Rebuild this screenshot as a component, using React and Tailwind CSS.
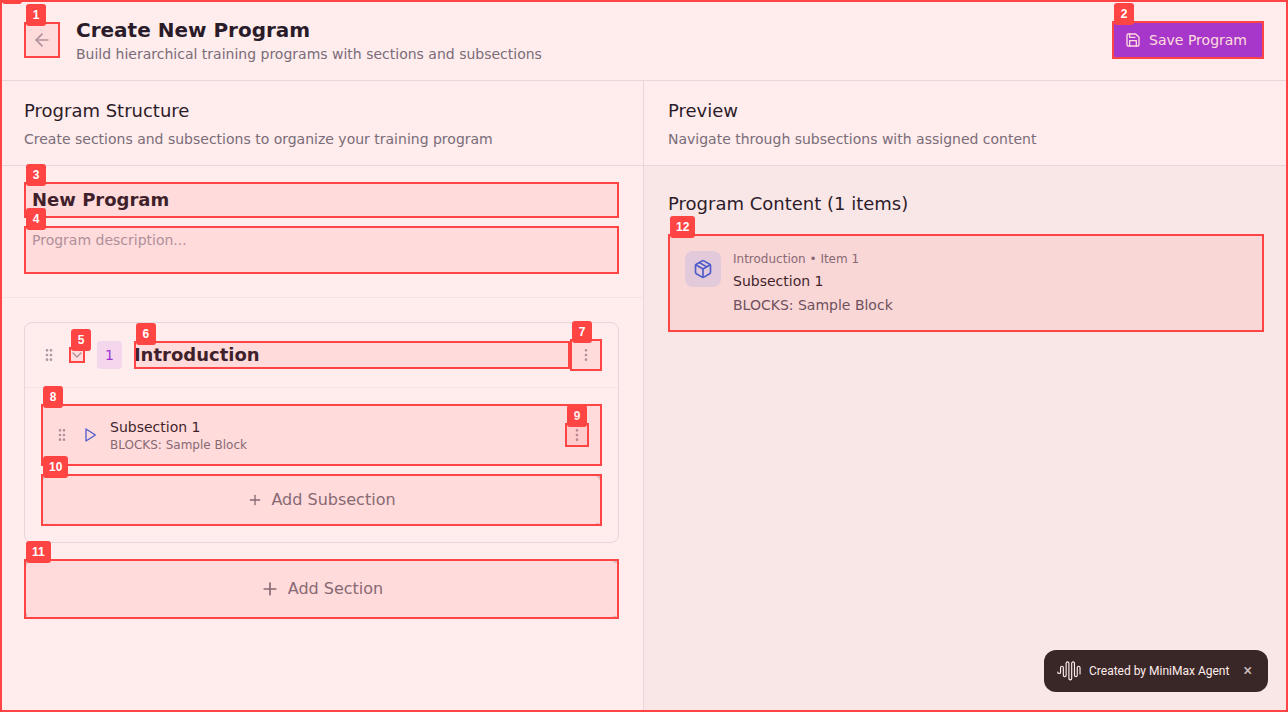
import React from "react";
import { ArrowLeft, ChevronDown, GripVertical, EllipsisVertical, Plus, Package } from "lucide-react";

function Mark({ n }) {
  return (
    <span className="pointer-events-none absolute inset-0 z-20 border-2 border-[#ff4444] bg-[#ff4444]/10">
      <span className="absolute -top-5 left-0 flex h-[22px] min-w-5 items-center justify-center rounded-[3px] bg-[#ff4444] px-1.5 font-['Liberation_Sans',sans-serif] text-xs leading-[14px] font-bold text-white">
        {n}
      </span>
    </span>
  );
}

function PageMark() {
  return (
    <span className="pointer-events-none absolute inset-0 z-10 border-2 border-[#ff4444] bg-[#ff4444]/10">
      <span className="absolute -top-5 left-0 h-[22px] w-5 rounded-[3px] bg-[#ff4444]" />
    </span>
  );
}

function SaveIcon() {
  return (
    <svg width="16" height="16" viewBox="0 0 24 24" fill="none" stroke="currentColor" strokeWidth="2" strokeLinecap="round" strokeLinejoin="round" aria-hidden="true">
      <path d="M19 21H5a2 2 0 0 1-2-2V5a2 2 0 0 1 2-2h11l5 5v11a2 2 0 0 1-2 2z" />
      <polyline points="17 21 17 13 7 13 7 21" />
      <polyline points="7 3 7 8 15 8" />
    </svg>
  );
}

function PlayIcon() {
  return (
    <svg className="ml-3 text-[#2563eb]" width="16" height="16" viewBox="0 0 24 24" fill="none" stroke="currentColor" strokeWidth="2" strokeLinecap="round" strokeLinejoin="round" aria-hidden="true">
      <polygon points="6 3 20 12 6 21 6 3" />
    </svg>
  );
}

function PaneHeader({ title, text }) {
  return (
    <div className="border-b border-[#e5e7eb] bg-white px-6 py-4">
      <h2 className="text-lg leading-7 font-medium text-[#111827]">{title}</h2>
      <p className="mt-1 text-sm leading-5 text-[#6b7280]">{text}</p>
    </div>
  );
}

function Header() {
  return (
    <header className="flex items-center justify-between border-b border-[#e5e7eb] bg-white px-6 py-4">
      <div className="flex items-center gap-4">
        <button aria-label="Back" className="relative p-2 text-[#9ca3af]">
          <ArrowLeft size={20} />
          <Mark n="1" />
        </button>
        <div>
          <h1 className="text-xl leading-7 font-bold text-[#111827]">Create New Program</h1>
          <p className="text-sm leading-5 text-[#6b7280]">Build hierarchical training programs with sections and subsections</p>
        </div>
      </div>
      <button className="relative flex items-center gap-2 rounded-lg bg-[#9333ea] py-[9px] pr-[17px] pl-[13px] text-sm leading-5 font-medium text-white">
        <SaveIcon />
        Save Program
        <Mark n="2" />
      </button>
    </header>
  );
}

function Subsection() {
  return (
    <div className="relative flex items-center rounded-lg bg-white p-[13px]">
      <GripVertical size={16} className="text-[#9ca3af]" />
      <PlayIcon />
      <div className="ml-3 flex-1">
        <h4 className="text-sm leading-5 font-medium text-[#111827]">Subsection 1</h4>
        <p className="text-xs leading-4 text-[#6b7280]">BLOCKS: Sample Block</p>
      </div>
      <button aria-label="Subsection options" className="relative p-1 text-[#9ca3af]">
        <EllipsisVertical size={16} />
        <Mark n="9" />
      </button>
      <Mark n="8" />
    </div>
  );
}

function Section() {
  return (
    <section className="rounded-lg border border-[#e5e7eb] bg-white">
      <div className="flex items-center border-b border-[#f3f4f6] p-4">
        <GripVertical size={16} className="text-[#9ca3af]" />
        <button aria-label="Collapse section" className="relative ml-3 text-[#9ca3af]">
          <ChevronDown size={16} />
          <Mark n="5" />
        </button>
        <span className="ml-3 rounded bg-[#f3e8ff] px-2 py-1 text-sm leading-5 font-medium text-[#9333ea]">1</span>
        <div className="relative ml-3 flex-1">
          <input aria-label="Section title" defaultValue="Introduction" className="block h-7 w-full bg-transparent text-lg leading-7 font-semibold text-[#111827] outline-none" />
          <Mark n="6" />
        </div>
        <button aria-label="Section options" className="relative p-2 text-[#9ca3af]">
          <EllipsisVertical size={16} />
          <Mark n="7" />
        </button>
      </div>
      <div className="flex flex-col gap-2 p-4">
        <Subsection />
        <div className="relative">
          <button className="flex w-full items-center justify-center gap-2 rounded-lg border-2 border-dashed border-[#d1d5db] bg-white p-3 leading-6 text-[#6b7280]">
            <Plus size={16} />
            Add Subsection
          </button>
          <Mark n="10" />
        </div>
      </div>
    </section>
  );
}

function Structure() {
  return (
    <div className="flex w-1/2 flex-col border-r border-[#e5e7eb] bg-white">
      <PaneHeader title="Program Structure" text="Create sections and subsections to organize your training program" />
      <div className="border-b border-[#f3f4f6] px-6 pt-4 pb-[23px]">
        <div className="relative">
          <input aria-label="Program title" defaultValue="New Program" className="block h-9 w-full bg-transparent px-2 pb-0.5 text-lg leading-7 font-semibold text-[#111827] outline-none" />
          <Mark n="3" />
        </div>
        <div className="relative mt-2">
          <textarea aria-label="Program description" placeholder="Program description..." className="block h-12 w-full resize-none bg-transparent px-2 py-1 text-sm leading-5 text-[#6b7280] outline-none placeholder:text-[#9ca3af]" />
          <Mark n="4" />
        </div>
      </div>
      <div className="flex flex-col gap-4 p-6">
        <Section />
        <div className="relative">
          <button className="flex w-full items-center justify-center gap-2 rounded-lg border-2 border-dashed border-[#d1d5db] bg-white p-4 leading-6 text-[#6b7280]">
            <Plus size={20} />
            Add Section
          </button>
          <Mark n="11" />
        </div>
      </div>
    </div>
  );
}

function Preview() {
  return (
    <div className="flex w-1/2 flex-col bg-[#f9fafb]">
      <PaneHeader title="Preview" text="Navigate through subsections with assigned content" />
      <div className="p-6">
        <h3 className="text-lg leading-7 font-medium text-[#111827]">Program Content (1 items)</h3>
        <article className="relative mt-4 flex gap-3 rounded-lg bg-[#f9fafb] p-[17px]">
          <div className="flex size-9 items-center justify-center rounded-lg bg-[#dbeafe] text-[#2563eb]">
            <Package size={20} />
          </div>
          <div>
            <p className="text-xs leading-4 text-[#6b7280]">Introduction • Item 1</p>
            <h4 className="mt-1 text-sm leading-5 font-medium text-[#111827]">Subsection 1</h4>
            <p className="mt-1 text-sm leading-5 text-[#4b5563]">BLOCKS: Sample Block</p>
          </div>
          <Mark n="12" />
        </article>
      </div>
    </div>
  );
}

function AgentBadge() {
  return (
    <div className="fixed right-5 bottom-5 flex h-[42px] w-56 items-center rounded-xl bg-[#232424] pr-4 pl-[13px] font-[Roboto,sans-serif] text-xs leading-4 text-white">
      <svg width="24" height="22" viewBox="0 0 25 22" fill="none" stroke="currentColor" strokeWidth="1.2" strokeLinecap="round" aria-hidden="true">
        <path d="M.8 12.2a1.45 1.45 0 0 0 2.9 0V7.5a1.45 1.45 0 0 1 2.9 0V15.5a1.45 1.45 0 0 0 2.9 0V3a1.45 1.45 0 0 1 2.9 0V18.8a1.45 1.45 0 0 0 2.9 0V3a1.45 1.45 0 0 1 2.9 0V15.5a1.45 1.45 0 0 0 2.9 0V7.5a1.45 1.45 0 0 1 2.9 0V14" />
      </svg>
      <span className="ml-2 flex-1">Created by MiniMax Agent</span>
      <button aria-label="Close" className="text-base leading-4 font-medium text-[#c4c8c8]">×</button>
    </div>
  );
}

export default function App() {
  return (
    <div className="relative flex min-h-screen flex-col overflow-hidden font-['DejaVu_Sans',sans-serif]">
      <Header />
      <main className="flex flex-1">
        <Structure />
        <Preview />
      </main>
      <AgentBadge />
      <PageMark />
    </div>
  );
}
